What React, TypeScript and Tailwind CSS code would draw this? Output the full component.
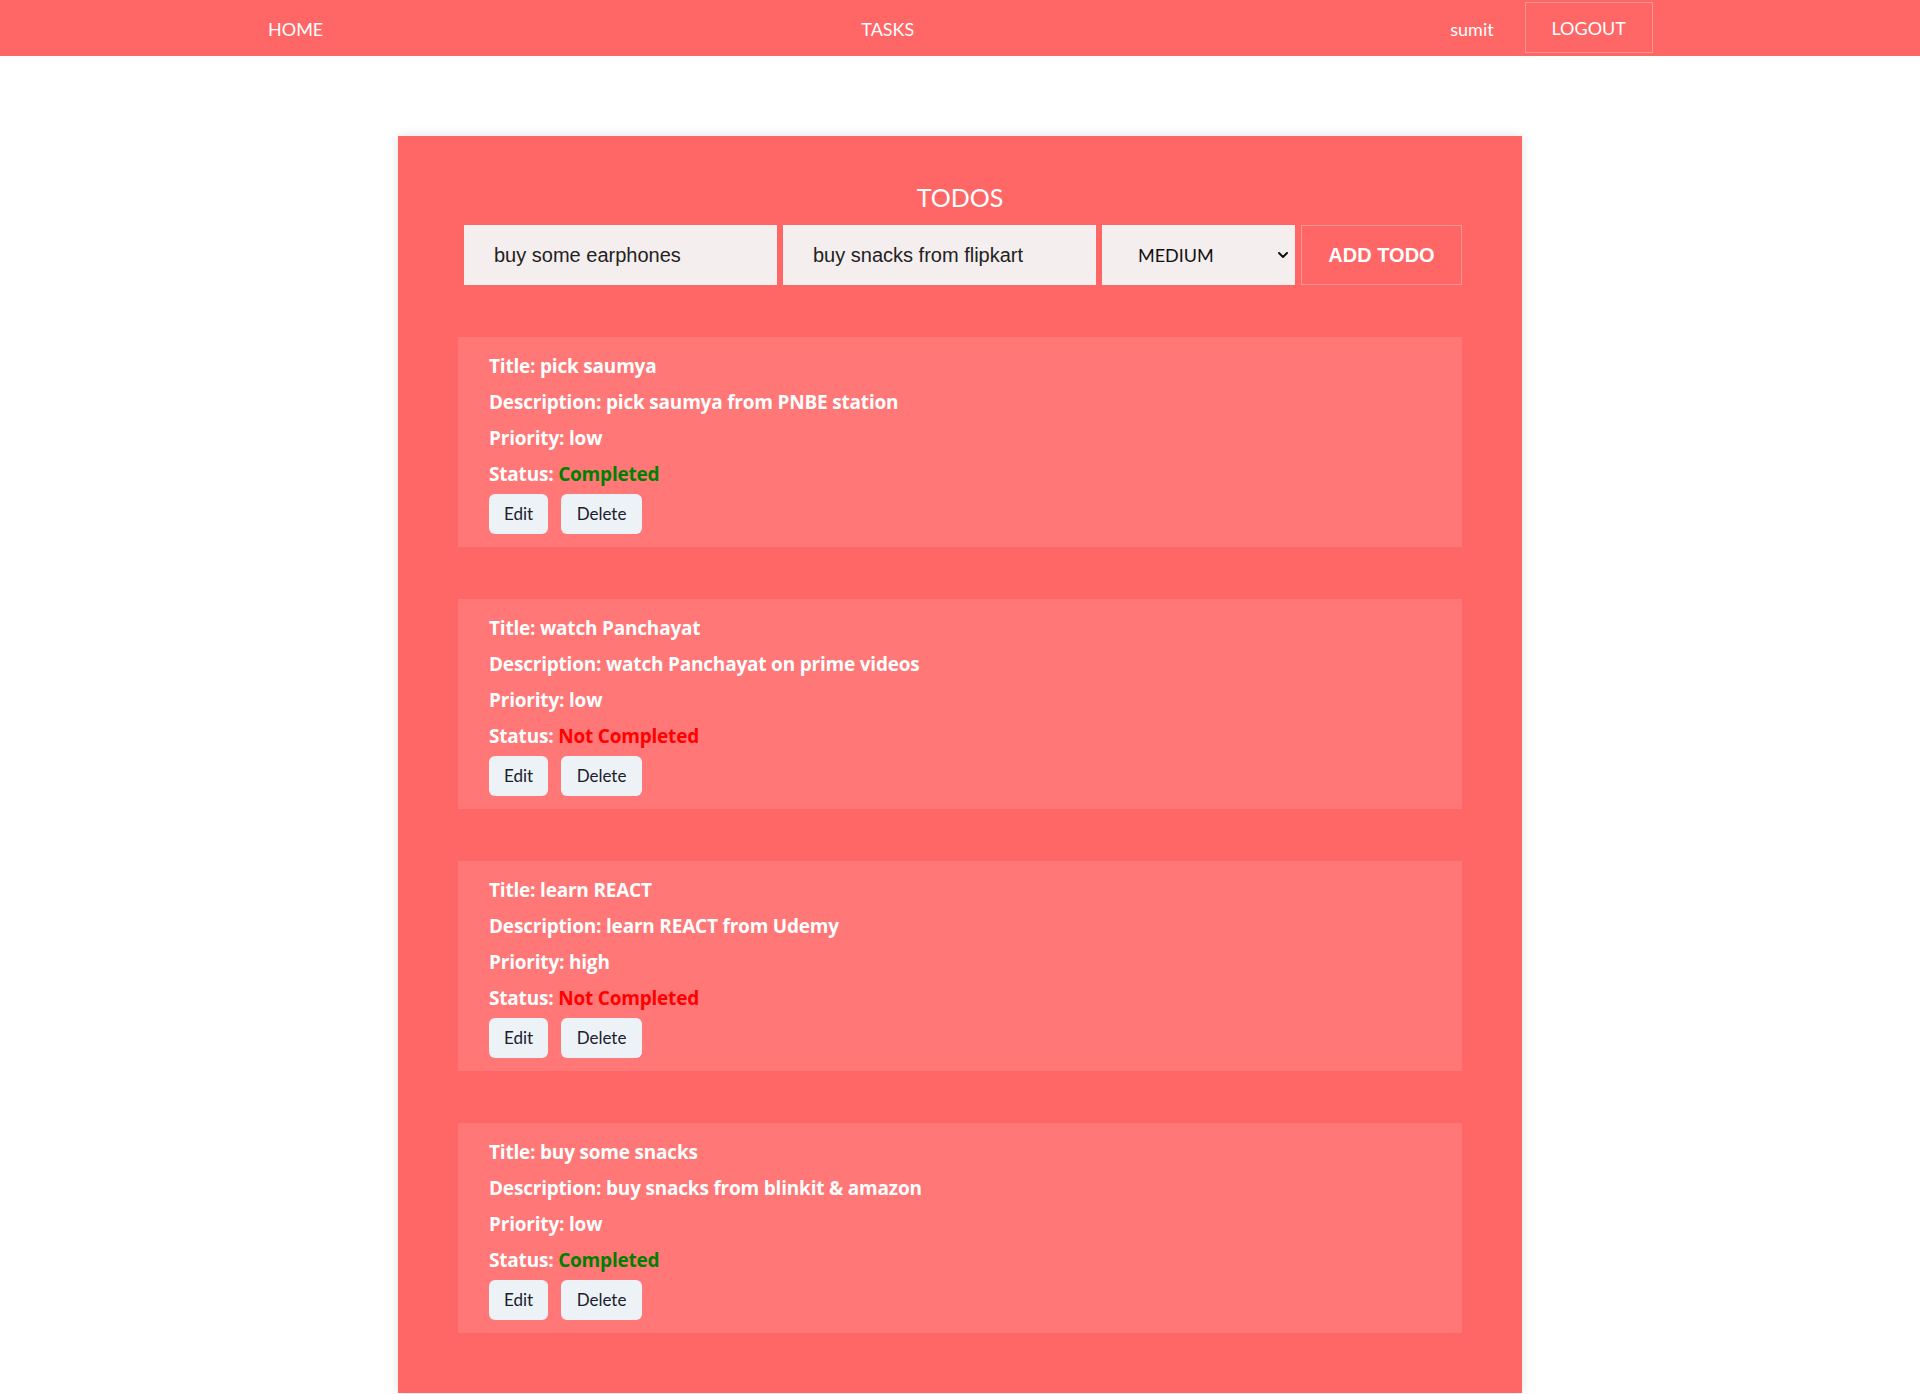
import { ChevronDown } from 'lucide-react';

type Todo = {
  title: string;
  description: string;
  priority: string;
  completed: boolean;
};

const todos: Todo[] = [
  { title: 'pick saumya', description: 'pick saumya from PNBE station', priority: 'low', completed: true },
  { title: 'watch Panchayat', description: 'watch Panchayat on prime videos', priority: 'low', completed: false },
  { title: 'learn REACT', description: 'learn REACT from Udemy', priority: 'high', completed: false },
  { title: 'buy some snacks', description: 'buy snacks from blinkit & amazon', priority: 'low', completed: true },
];

const uiFont = "font-['Lato','Noto_Sans',sans-serif]";

function Header() {
  return (
    <header className={`h-[56px] bg-[#ff6666] text-white text-[18px] flex items-center ${uiFont}`}>
      <a className="ml-[268px] mt-[2px]">HOME</a>
      <a className="ml-[538px] mt-[2px]">TASKS</a>
      <span className="ml-[536px] mt-[2px]">sumit</span>
      <button className="ml-[31px] h-[51px] w-[128px] border border-white/30 self-start mt-[2px] pt-[2px]">LOGOUT</button>
    </header>
  );
}

function TodoCard({ todo }: { todo: Todo }) {
  return (
    <div className="bg-[#ff7777] pt-[17px] pb-[13px] px-[31px] text-white">
      <div className="flex flex-col gap-[12px] font-['Open_Sans','Noto_Sans',sans-serif] font-bold text-[19px] leading-[24px] tracking-[-0.2px]">
        <p>Title: {todo.title}</p>
        <p>Description: {todo.description}</p>
        <p>Priority: {todo.priority}</p>
        <p>
          Status:{' '}
          <span className={todo.completed ? 'text-[#008000]' : 'text-[#ff0000]'}>
            {todo.completed ? 'Completed' : 'Not Completed'}
          </span>
        </p>
      </div>
      <div className={`mt-[8px] flex gap-[13px] text-[17px] text-[#1a202c] ${uiFont}`}>
        <button className="h-[40px] w-[59px] rounded-[6px] bg-[#edf2f7]">Edit</button>
        <button className="h-[40px] w-[81px] rounded-[6px] bg-[#edf2f7]">Delete</button>
      </div>
    </div>
  );
}

export default function App() {
  return (
    <div className="min-h-screen bg-white">
      <Header />

      <main className="mt-[80px] mx-auto w-[1124px] bg-[#ff6666] shadow-[0_0_10px_rgba(0,0,0,0.12)] px-[60px] pt-[45px] pb-[60px]">
        <h2 className={`text-center text-white text-[25px] leading-[32px] ${uiFont}`}>TODOS</h2>

        <form className="mt-[12px] flex justify-end gap-[6px] font-['Liberation_Sans',Arial,sans-serif]">
          <input
            defaultValue="buy some earphones"
            className="h-[60px] w-[313px] bg-[#f5eeee] px-[30px] text-[20px] text-[#222] outline-none"
          />
          <input
            defaultValue="buy snacks from flipkart"
            className="h-[60px] w-[313px] bg-[#f5eeee] px-[30px] text-[20px] text-[#222] outline-none"
          />
          <div className="relative h-[60px] w-[193px]">
            <select
              defaultValue="MEDIUM"
              className={`h-full w-full appearance-none bg-[#f5eeee] pl-[36px] text-[18px] text-[#111] outline-none ${uiFont}`}
            >
              <option>LOW</option>
              <option>MEDIUM</option>
              <option>HIGH</option>
            </select>
            <ChevronDown className="pointer-events-none absolute right-[4px] top-[22px] h-[16px] w-[16px] text-[#111]" strokeWidth={3} />
          </div>
          <button
            type="button"
            className="h-[60px] w-[161px] border border-white/30 text-white font-bold text-[20px]"
          >
            ADD TODO
          </button>
        </form>

        <div className="mt-[52px] flex flex-col gap-[52px]">
          {todos.map((todo) => (
            <TodoCard key={todo.title} todo={todo} />
          ))}
        </div>
      </main>
    </div>
  );
}
